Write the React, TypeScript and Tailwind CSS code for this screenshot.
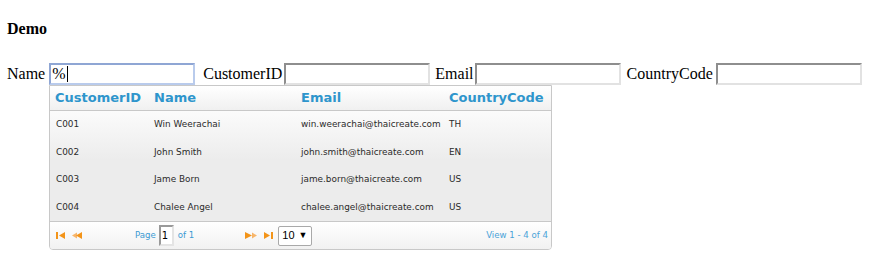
import React from "react";

const rows = [
  ["C001", "Win Weerachai", "win.weerachai@thaicreate.com", "TH"],
  ["C002", "John Smith", "john.smith@thaicreate.com", "EN"],
  ["C003", "Jame Born", "jame.born@thaicreate.com", "US"],
  ["C004", "Chalee Angel", "chalee.angel@thaicreate.com", "US"],
];

const inputCls =
  "block shrink-0 h-[22px] w-[146px] border-2 border-t-[#8e8e8e] border-l-[#8e8e8e] border-r-[#e2e2e2] border-b-[#e2e2e2] bg-white outline-none";

function First() {
  return (
    <svg width="10" height="7" viewBox="0 0 10 7">
      <rect x="0" y="0" width="2" height="7" fill="#f39419" />
      <polygon points="3,3.5 9,0 9,7" fill="#f39419" />
    </svg>
  );
}
function Prev() {
  return (
    <svg width="11" height="7" viewBox="0 0 11 7">
      <polygon points="0,3.5 5,0.5 5,6.5" fill="#f7b56a" />
      <polygon points="4,3.5 10,0 10,7" fill="#f39419" />
    </svg>
  );
}
function Next() {
  return (
    <svg width="14" height="7" viewBox="0 0 14 7">
      <polygon points="0,0 7,3.5 0,7" fill="#f39419" />
      <polygon points="7,0.5 12,3.5 7,6.5" fill="#f7b56a" />
    </svg>
  );
}
function Last() {
  return (
    <svg width="10" height="7" viewBox="0 0 10 7">
      <polygon points="0,0 6,3.5 0,7" fill="#f39419" />
      <rect x="7" y="0" width="2" height="7" fill="#f39419" />
    </svg>
  );
}

export default function App() {
  const serif = { fontFamily: '"Liberation Serif", "Times New Roman", serif' };
  const sans = { fontFamily: '"DejaVu Sans", Verdana, sans-serif' };
  return (
    <div className="w-[876px] h-[277px] overflow-hidden bg-white text-black" style={serif}>
      <div className="px-[7px]">
        <div className="pt-[20px] text-[16px] leading-[18px] font-bold">Demo</div>
        <div className="mt-[25px] flex w-[870px] items-center whitespace-nowrap text-[16px] leading-[22px]">
          <span className="shrink-0">Name</span>
          <div className="ml-[4px] flex h-[22px] w-[146px] shrink-0 items-center border-2 border-t-[#8fa6d4] border-l-[#8fa6d4] border-r-[#b9cbec] border-b-[#b9cbec] bg-white pl-[1px] leading-[18px]">
            <span>%</span>
            <span className="ml-[1px] inline-block h-[16px] w-[1px] bg-black" />
          </div>
          <span className="ml-[8px] shrink-0">CustomerID</span>
          <input readOnly className={inputCls + " ml-[2px]"} />
          <span className="ml-[5px] shrink-0">Email</span>
          <input readOnly className={inputCls + " ml-[1px]"} />
          <span className="ml-[6px] shrink-0">CountryCode</span>
          <input readOnly className={inputCls + " ml-[3px]"} />
        </div>
        <div
          className="ml-[42px] w-[503px] rounded-b-[4px] border border-[#c8c8c8] overflow-hidden"
          style={sans}
        >
          <div className="flex h-[25px] items-center border-b border-[#c8c8c8] bg-gradient-to-b from-[#ffffff] to-[#f0f0f0] text-[13px] font-bold text-[#2e95cc]">
            <div className="w-[98px] pl-[5px]">CustomerID</div>
            <div className="w-[147px] pl-[6px]">Name</div>
            <div className="w-[148px] pl-[6px]">Email</div>
            <div className="flex-1 pl-[6px]">CountryCode</div>
          </div>
          <div className="bg-[linear-gradient(to_bottom,#fbfbfb,#ececec_45%,#ececec)] text-[8.9px] text-[#2a2a2a]">
            {rows.map((r, i) => (
              <div key={i} className="flex h-[27.5px] items-center">
                <div className="w-[98px] pl-[6px]">{r[0]}</div>
                <div className="w-[147px] pl-[6px]">{r[1]}</div>
                <div className="w-[148px] pl-[6px]">{r[2]}</div>
                <div className="flex-1 pl-[6px]">{r[3]}</div>
              </div>
            ))}
          </div>
          <div className="flex h-[28px] items-center border-t border-[#c8c8c8] bg-gradient-to-b from-[#ffffff] to-[#f1f1f1] text-[8.6px] text-[#3b9ad3]">
            <div className="ml-[6px] flex items-center">
              <First />
            </div>
            <div className="ml-[6px] flex items-center">
              <Prev />
            </div>
            <span className="ml-[52px]">Page</span>
            <div className="ml-[3px] flex h-[21px] w-[15px] items-center border-2 border-t-[#999] border-l-[#999] border-r-[#e4e4e4] border-b-[#e4e4e4] bg-white pl-[1px] text-[10px] text-black">
              1
            </div>
            <span className="ml-[4px]">of 1</span>
            <div className="ml-[51px] flex items-center">
              <Next />
            </div>
            <div className="ml-[5px] flex items-center">
              <Last />
            </div>
            <div
              className="ml-[4px] flex h-[20px] w-[34px] items-center rounded-[2px] border border-[#a9a9a9] bg-white pl-[3px] text-[11px] text-black"
              style={{ fontFamily: '"Liberation Sans", Arial, sans-serif' }}
            >
              <span>10</span>
              <span className="ml-[4px] text-[9px]">▼</span>
            </div>
            <span className="ml-auto mr-[3px] text-[#4aa3d8]">View 1 - 4 of 4</span>
          </div>
        </div>
      </div>
    </div>
  );
}
